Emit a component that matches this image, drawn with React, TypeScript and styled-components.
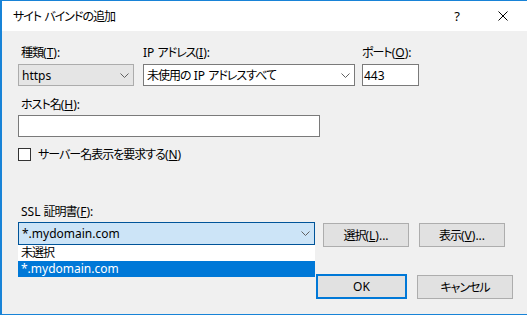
import * as React from "react";
import styled, { createGlobalStyle } from "styled-components";

const GlobalStyle = createGlobalStyle`
  html, body {
    margin: 0;
    padding: 0;
    background: #ffffff;
  }
  body {
    font-family: "Noto Sans", "Noto Sans CJK JP", sans-serif;
    font-size: 12px;
    color: #000;
  }
  * {
    box-sizing: border-box;
  }
`;

const Window = styled.div`
  width: 527px;
  height: 315px;
  display: flex;
  flex-direction: column;
  border-left: 2px solid #1883d7;
  border-top: 1px solid #1883d7;
  border-bottom: 1px solid #1883d7;
  font-feature-settings: "palt";
  letter-spacing: -1px;
  overflow: hidden;
`;

// latin runs keep normal spacing, only the kana/kanji are tightened
const Latin = styled.span`
  letter-spacing: 0;
  white-space: pre;
`;

const TitleBar = styled.div`
  height: 30px;
  flex: none;
  background: #fff;
  display: flex;
  align-items: center;
  padding-left: 11px;
  padding-right: 1px;
`;

const TitleText = styled.div`
  flex: 1;
  font-size: 12px;
`;

const TitleButton = styled.div`
  width: 46px;
  height: 30px;
  display: flex;
  align-items: center;
  justify-content: center;
  font-size: 13px;
  letter-spacing: 0;
`;

const Body = styled.div`
  flex: 1;
  background: #f0f0f0;
  padding: 14px 14px 0 16px;
  display: flex;
  flex-direction: column;
`;

const Row = styled.div<{ $top?: number }>`
  display: flex;
  align-items: flex-start;
  margin-top: ${(p) => p.$top ?? 0}px;
`;

const Field = styled.div<{ $width: number; $left?: number }>`
  width: ${(p) => p.$width}px;
  margin-left: ${(p) => p.$left ?? 0}px;
  display: flex;
  flex-direction: column;
`;

const Label = styled.div<{ $indent?: number; $gap?: number }>`
  height: 16px;
  line-height: 16px;
  padding-left: ${(p) => p.$indent ?? 0}px;
  margin-bottom: ${(p) => p.$gap ?? 3}px;
  white-space: nowrap;
`;

const comboColors = {
  plain: { bg: "#e5e5e5", border: "#acacac" },
  white: { bg: "#ffffff", border: "#7a7a7a" },
  focus: { bg: "#cce4f7", border: "#005499" },
};

const Combo = styled.div<{ $kind: keyof typeof comboColors; $height?: number }>`
  position: relative;
  height: ${(p) => p.$height ?? 22}px;
  display: flex;
  align-items: center;
  justify-content: space-between;
  padding: 0 4px 0 3px;
  background: ${(p) => comboColors[p.$kind].bg};
  border: 1px solid ${(p) => comboColors[p.$kind].border};
  white-space: nowrap;
`;

const TextBox = styled.div`
  width: 100%;
  height: 22px;
  display: flex;
  align-items: center;
  padding-left: 1px;
  background: #fff;
  border: 1px solid #7a7a7a;
  letter-spacing: 0;
`;

const CheckRow = styled.label`
  display: flex;
  align-items: center;
  gap: 7px;
  height: 16px;
  margin-top: 9px;
`;

const CheckBox = styled.span`
  width: 13px;
  height: 13px;
  border: 1px solid #333;
  background: #fff;
`;

const Button = styled.div<{ $width: number; $height?: number; $default?: boolean; $left?: number; $top?: number }>`
  width: ${(p) => p.$width}px;
  height: ${(p) => p.$height ?? 24}px;
  margin-left: ${(p) => p.$left ?? 0}px;
  margin-top: ${(p) => p.$top ?? 0}px;
  display: flex;
  align-items: center;
  justify-content: center;
  background: #e1e1e1;
  border: ${(p) => (p.$default ? "2px solid #0078d7" : "1px solid #adadad")};
  white-space: nowrap;
`;

const Footer = styled.div`
  display: flex;
  justify-content: flex-end;
  align-items: flex-end;
  gap: 10px;
  margin-top: 27px;
`;

const DropList = styled.div`
  position: absolute;
  top: 22px;
  left: -1px;
  right: -1px;
  display: flex;
  flex-direction: column;
  z-index: 2;
`;

const DropItem = styled.div<{ $selected?: boolean }>`
  height: 16px;
  line-height: 16px;
  padding-left: 3px;
  background: ${(p) => (p.$selected ? "#0078d7" : "#ffffff")};
  color: ${(p) => (p.$selected ? "#ffffff" : "#000000")};
`;

const Key = ({ k, tail = "" }: { k: string; tail?: string }) => (
  <Latin>
    (<u>{k}</u>){tail}
  </Latin>
);

const Chevron = () => (
  <svg width="9" height="5" viewBox="0 0 9 5">
    <polyline points="0.5,0.5 4.5,4.5 8.5,0.5" fill="none" stroke="#606060" strokeWidth="1" />
  </svg>
);

const CloseIcon = () => (
  <svg width="10" height="10" viewBox="0 0 10 10">
    <path d="M0.5 0.5 L9.5 9.5 M9.5 0.5 L0.5 9.5" stroke="#000" strokeWidth="1" />
  </svg>
);

const App: React.FC = () => {
  return (
    <Window>
      <GlobalStyle />
      <TitleBar>
        <TitleText>
          サイト<Latin> </Latin>バインドの追加
        </TitleText>
        <TitleButton>?</TitleButton>
        <TitleButton>
          <CloseIcon />
        </TitleButton>
      </TitleBar>
      <Body>
        <Row>
          <Field $width={116}>
            <Label $indent={3}>
              種類<Key k="T" tail=":" />
            </Label>
            <Combo $kind="plain">
              <Latin>https</Latin>
              <Chevron />
            </Combo>
          </Field>
          <Field $width={212} $left={9}>
            <Label>
              <Latin>IP </Latin>アドレス<Key k="I" tail=":" />
            </Label>
            <Combo $kind="white">
              <span>
                未使用の<Latin> IP </Latin>アドレスすべて
              </span>
              <Chevron />
            </Combo>
          </Field>
          <Field $width={57} $left={7}>
            <Label>
              ポート<Key k="O" tail=":" />
            </Label>
            <TextBox>443</TextBox>
          </Field>
        </Row>
        <Row $top={11}>
          <Field $width={302}>
            <Label $indent={3} $gap={2}>
              ホスト名<Key k="H" tail=":" />
            </Label>
            <TextBox />
          </Field>
        </Row>
        <CheckRow>
          <CheckBox />
          <span>
            サーバー名表示を要求する<Key k="N" />
          </span>
        </CheckRow>
        <Row $top={42}>
          <Field $width={297}>
            <Label $indent={3} $gap={2}>
              <Latin>SSL </Latin>証明書<Key k="F" tail=":" />
            </Label>
            <Combo $kind="focus" $height={23}>
              <Latin>*.mydomain.com</Latin>
              <Chevron />
              <DropList>
                <DropItem>未選択</DropItem>
                <DropItem $selected>
                  <Latin>*.mydomain.com</Latin>
                </DropItem>
              </DropList>
            </Combo>
          </Field>
          <Button $width={86} $left={8} $top={19}>
            選択<Key k="L" tail="..." />
          </Button>
          <Button $width={86} $left={10} $top={19}>
            表示<Key k="V" tail="..." />
          </Button>
        </Row>
        <Footer>
          <Button $width={91} $height={25} $default>
            <Latin>OK</Latin>
          </Button>
          <Button $width={96}>キャンセル</Button>
        </Footer>
      </Body>
    </Window>
  );
};

export default App;
